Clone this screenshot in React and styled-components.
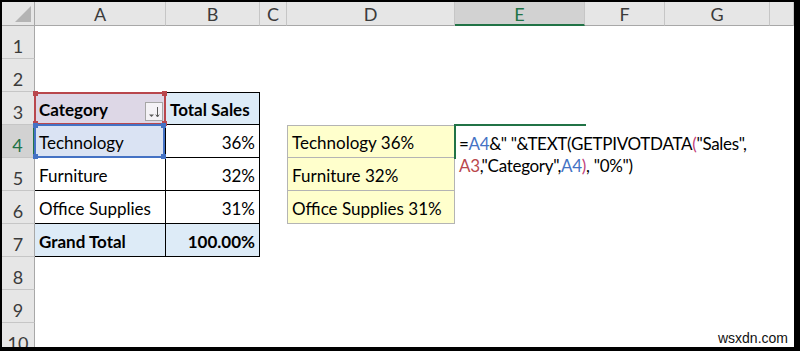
import React from "react";
import styled, { createGlobalStyle } from "styled-components";

const GlobalStyle = createGlobalStyle`
  html, body {
    margin: 0;
    padding: 0;
    background: #000;
  }
  * {
    box-sizing: border-box;
  }
`;

const FONT = `"Lato", "Open Sans", "Liberation Sans", sans-serif`;

const COLS = ["A", "B", "C", "D", "E", "F", "G", "H"];
const ROWS = [1, 2, 3, 4, 5, 6, 7, 8, 9, 10];
const ACTIVE_COL = "E";
const ACTIVE_ROW = 4;

const Frame = styled.div`
  width: 800px;
  height: 351px;
  padding: 2px 6px 4px 2px;
  background: #000;
`;

const Sheet = styled.div`
  position: relative;
  width: 100%;
  height: 100%;
  overflow: hidden;
  background: #fff;
  display: grid;
  grid-template-columns: 33px 131px 94px 27px 168px 130px 80px 105px 1fr;
  grid-template-rows: 24px repeat(10, 33px);
  font-family: ${FONT};
  font-size: 17px;
  color: #000;
`;

const Corner = styled.div`
  background: #e6e6e6;
  border-right: 1px solid #a8a8a8;
  border-bottom: 1px solid #a8a8a8;
  display: flex;
  align-items: flex-end;
  justify-content: flex-end;
  padding: 0 3px 3px 0;
`;

const ColHead = styled.div`
  background: ${(p) => (p.$active ? "#d2d2d2" : "#e6e6e6")};
  border-right: 1px solid #c6c6c6;
  border-bottom: ${(p) => (p.$active ? "2px solid #217346" : "1px solid #a8a8a8")};
  color: ${(p) => (p.$active ? "#217346" : "#3b3b3b")};
  display: flex;
  align-items: center;
  justify-content: center;
  font-size: 18px;
  padding-top: ${(p) => (p.$active ? "1px" : "0")};
`;

const RowHead = styled.div`
  background: ${(p) => (p.$active ? "#d2d2d2" : "#e6e6e6")};
  border-bottom: 1px solid #c6c6c6;
  border-right: ${(p) => (p.$active ? "2px solid #217346" : "1px solid #a8a8a8")};
  color: ${(p) => (p.$active ? "#217346" : "#3b3b3b")};
  display: flex;
  align-items: center;
  justify-content: center;
  font-size: 18px;
  padding-top: 8px;
`;

const Cell = styled.div`
  position: relative;
  display: flex;
  align-items: center;
  justify-content: ${(p) => (p.$align === "right" ? "flex-end" : "flex-start")};
  padding: 2px 4px 0 4px;
  background: ${(p) => p.$fill || "#fff"};
  font-weight: ${(p) => (p.$bold ? 700 : 400)};
  white-space: nowrap;
  border-top: ${(p) => (p.$sides?.includes("t") ? `1px solid ${p.$line}` : "none")};
  border-right: ${(p) => (p.$sides?.includes("r") ? `1px solid ${p.$line}` : "none")};
  border-bottom: ${(p) => (p.$sides?.includes("b") ? `1px solid ${p.$line}` : "none")};
  border-left: ${(p) => (p.$sides?.includes("l") ? `1px solid ${p.$line}` : "none")};
`;

const RefBox = styled.div`
  position: absolute;
  inset: -1px 0 -1px -1px;
  border: 2px solid ${(p) => p.$color};
  pointer-events: none;
  z-index: 2;
`;

const Handle = styled.span`
  position: absolute;
  width: 5px;
  height: 5px;
  background: ${(p) => p.$color};
  ${(p) => (p.$y === "top" ? "top: -3px;" : "bottom: -3px;")}
  ${(p) => (p.$x === "left" ? "left: -3px;" : "right: -3px;")}
`;

const FilterButton = styled.div`
  position: absolute;
  right: 3px;
  bottom: 3px;
  width: 18px;
  height: 19px;
  border: 1px solid #a6a6a6;
  background: #f4f2f6;
  display: flex;
  align-items: center;
  justify-content: center;
  z-index: 3;
`;

const ActiveFrame = styled.div`
  position: absolute;
  inset: -1px auto auto -1px;
  width: calc(100% + 2px);
  height: 35px;
  border-top: 2px solid #217346;
  border-left: 2px solid #217346;
  z-index: 3;
`;

const Editor = styled.div`
  position: absolute;
  top: 8px;
  left: 4px;
  width: 300px;
  line-height: 22px;
  letter-spacing: -0.3px;
  white-space: normal;
  color: #000;
  z-index: 4;
`;

const Ref = styled.span`
  color: ${(p) => p.$color};
`;

const Watermark = styled.div`
  position: absolute;
  right: 0;
  bottom: 0;
  padding: 0 6px 1px 6px;
  background: #fff;
  font-family: "Liberation Sans", Arial, sans-serif;
  font-size: 14px;
  color: #111;
  z-index: 5;
`;

const RED = "#b9474d";
const BLUE = "#4472c4";
const PAREN = "#c2417a";

const PIVOT = { $line: "#000" };
const NOTE = { $line: "#b4b4b4", $fill: "#ffffcc" };

const data = {
  A3: { text: "Category", $bold: true, $fill: "#ddd7e6", $sides: "tb", ...PIVOT, ref: RED, filter: true },
  B3: { text: "Total Sales", $bold: true, $fill: "#ddebf7", $sides: "trb", ...PIVOT },
  A4: { text: "Technology", $fill: "#dae3f3", $sides: "rb", ...PIVOT, ref: BLUE },
  B4: { text: "36%", $align: "right", $sides: "rb", ...PIVOT },
  A5: { text: "Furniture", $sides: "rb", ...PIVOT },
  B5: { text: "32%", $align: "right", $sides: "rb", ...PIVOT },
  A6: { text: "Office Supplies", $sides: "rb", ...PIVOT },
  B6: { text: "31%", $align: "right", $sides: "rb", ...PIVOT },
  A7: { text: "Grand Total", $bold: true, $fill: "#ddebf7", $sides: "rb", ...PIVOT },
  B7: { text: "100.00%", $bold: true, $align: "right", $fill: "#ddebf7", $sides: "rb", ...PIVOT },
  D4: { text: "Technology 36%", $sides: "tlrb", ...NOTE },
  D5: { text: "Furniture 32%", $sides: "lrb", ...NOTE },
  D6: { text: "Office Supplies 31%", $sides: "lrb", ...NOTE },
};

function FilterIcon() {
  return (
    <svg width="14" height="14" viewBox="0 0 14 14">
      <path d="M2 9.5 L7 9.5 L4.5 12 Z" fill="#595959" />
      <path d="M10.5 2 V11.5" stroke="#595959" strokeWidth="1" />
      <path d="M8.8 9.6 L10.5 12 L12.2 9.6" stroke="#595959" strokeWidth="1" fill="none" />
    </svg>
  );
}

function SelectAll() {
  return (
    <svg width="16" height="16" viewBox="0 0 16 16">
      <path d="M0 16 L16 0 L16 16 Z" fill="#b4b4b4" />
    </svg>
  );
}

function Formula() {
  return (
    <Editor>
      =<Ref $color={BLUE}>A4</Ref>&amp;" "&amp;TEXT(GETPIVOTDATA<Ref $color={PAREN}>(</Ref>"Sales",{" "}
      <Ref $color={RED}>A3</Ref>,"Category",<Ref $color={BLUE}>A4</Ref>
      <Ref $color={PAREN}>)</Ref>, "0%")
    </Editor>
  );
}

function SheetCell({ id }) {
  const d = data[id] || {};
  const { text, ref, filter, ...style } = d;
  return (
    <Cell {...style}>
      {text}
      {ref && (
        <RefBox $color={ref}>
          <Handle $color={ref} $x="left" $y="top" />
          <Handle $color={ref} $x="right" $y="top" />
          <Handle $color={ref} $x="left" $y="bottom" />
          <Handle $color={ref} $x="right" $y="bottom" />
        </RefBox>
      )}
      {filter && (
        <FilterButton>
          <FilterIcon />
        </FilterButton>
      )}
      {id === `${ACTIVE_COL}${ACTIVE_ROW}` && (
        <>
          <ActiveFrame />
          <Formula />
        </>
      )}
    </Cell>
  );
}

export default function App() {
  return (
    <>
      <GlobalStyle />
      <Frame>
        <Sheet>
          <Corner>
            <SelectAll />
          </Corner>
          {COLS.map((c) => (
            <ColHead key={c} $active={c === ACTIVE_COL}>
              {c === "H" ? "" : c}
            </ColHead>
          ))}
          {ROWS.map((r) => (
            <React.Fragment key={r}>
              <RowHead $active={r === ACTIVE_ROW}>{r}</RowHead>
              {COLS.map((c) => (
                <SheetCell key={c + r} id={c + r} />
              ))}
            </React.Fragment>
          ))}
          <Watermark>wsxdn.com</Watermark>
        </Sheet>
      </Frame>
    </>
  );
}
